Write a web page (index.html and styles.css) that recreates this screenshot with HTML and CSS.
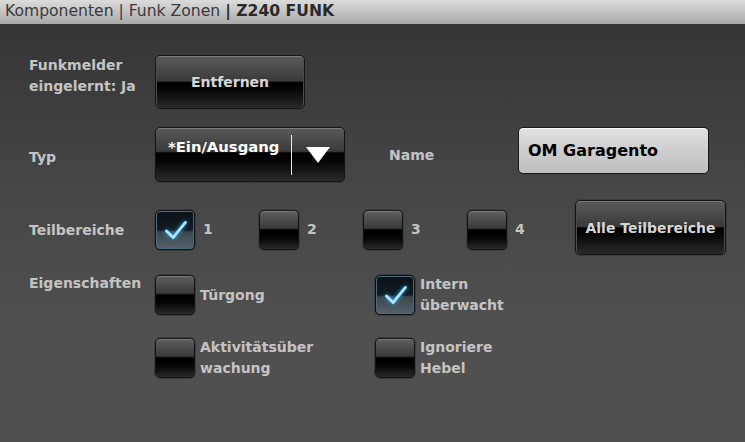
FILE: index.html
```html
<!DOCTYPE html>
<html lang="de">
<head>
    <meta charset="UTF-8">
    <title>Z240 FUNK</title>
    <link rel="stylesheet" href="styles.css">
</head>
<body>
    <div class="titlebar">Komponenten | Funk Zonen <b>| Z240 FUNK</b></div>

    <div class="panel">
        <!-- Funkmelder -->
        <div class="row row-learn">
            <div class="label label-learn">Funkmelder<br>eingelernt: Ja</div>
            <button class="btn btn-remove">Entfernen</button>
        </div>

        <!-- Typ / Name -->
        <div class="row row-type">
            <div class="label label-type">Typ</div>
            <div class="select">
                <span class="select-text">*Ein/Ausgang</span>
                <span class="select-sep"></span>
                <span class="select-arrow"></span>
            </div>
            <div class="label label-name">Name</div>
            <div class="name-field">OM Garagento</div>
        </div>

        <!-- Teilbereiche -->
        <div class="row row-areas">
            <div class="label label-areas">Teilbereiche</div>
            <div class="area"><span class="check checked"><svg viewBox="0 0 40 40"><path d="M11 21 L18 28 L31 12"/></svg></span><span class="opt">1</span></div>
            <div class="area"><span class="check"></span><span class="opt">2</span></div>
            <div class="area"><span class="check"></span><span class="opt">3</span></div>
            <div class="area"><span class="check"></span><span class="opt">4</span></div>
            <button class="btn btn-all">Alle Teilbereiche</button>
        </div>

        <!-- Eigenschaften -->
        <div class="row row-props">
            <div class="label label-top">Eigenschaften</div>
            <div class="prop"><span class="check"></span><span class="opt">Türgong</span></div>
            <div class="prop"><span class="check checked"><svg viewBox="0 0 40 40"><path d="M11 21 L18 28 L31 12"/></svg></span><span class="opt">Intern<br>überwacht</span></div>
        </div>
        <div class="row row-props2">
            <div class="label"></div>
            <div class="prop"><span class="check"></span><span class="opt">Aktivitätsüber<br>wachung</span></div>
            <div class="prop"><span class="check"></span><span class="opt">Ignoriere<br>Hebel</span></div>
        </div>
    </div>
</body>
</html>
```

FILE: styles.css
```css
html, body {
    margin: 0;
    height: 100%;
}
body {
    font-family: "DejaVu Sans", Verdana, sans-serif;
    background: linear-gradient(#333333, #474747 45%, #505050 75%, #505050);
    color: #c4c4c4;
    overflow: hidden;
}
.titlebar {
    height: 24px;
    line-height: 23px;
    padding-left: 5px;
    font-size: 15.6px;
    color: #3a3a3a;
    background: linear-gradient(#dcdcdc, #bdbdbd 60%, #a9a9a9);
    white-space: nowrap;
}
.titlebar b {
    color: #2a2a2a;
}
.panel {
    padding: 31px 0 0 29px;
}
.row {
    display: flex;
    align-items: center;
}
.label {
    width: 126px;
    flex: none;
    font-size: 14px;
    font-weight: bold;
    line-height: 21px;
}
.label-learn {
    margin-top: -12px;
}
.label-type {
    margin-top: 6px;
}
.label-areas {
    margin-top: 5px;
}
.label-top {
    align-self: flex-start;
    margin-top: -1px;
}
.btn {
    font-family: inherit;
    font-weight: bold;
    font-size: 14px;
    color: #d6d6d6;
    border: 1px solid #151515;
    border-radius: 5px;
    box-shadow: inset 0 1px 0 #7a7a7a, inset 1px 0 0 #4c4c4c, inset -1px 0 0 #4c4c4c, 0 0 0 1px #3c3c3c;
    background: linear-gradient(#5a5a5a, #3a3a3a 48%, #000 51%, #050505 62%, #2a2a2a);
    padding: 0;
    cursor: pointer;
}
.btn-remove {
    width: 150px;
    height: 54px;
}
.row-type {
    margin-top: 18px;
}
.select {
    width: 190px;
    height: 55px;
    box-sizing: border-box;
    display: flex;
    align-items: center;
    border: 1px solid #151515;
    border-radius: 5px;
    box-shadow: inset 0 1px 0 #7a7a7a, 0 0 0 1px #3c3c3c;
    background: linear-gradient(#5a5a5a, #3a3a3a 44%, #000 47%, #050505 62%, #2a2a2a);
    color: #fff;
    font-weight: bold;
    font-size: 14.8px;
}
.select-text {
    width: 123px;
    padding-left: 12px;
    margin-top: -16px;
    white-space: nowrap;
}
.select-sep {
    width: 1px;
    height: 40px;
    background: #e8e8e8;
}
.select-arrow {
    margin-left: 14px;
    width: 0;
    height: 0;
    border-left: 12px solid transparent;
    border-right: 12px solid transparent;
    border-top: 16px solid #fff;
}
.label-name {
    width: 129px;
    margin-left: 44px;
    margin-top: 1px;
}
.name-field {
    width: 191px;
    height: 47px;
    box-sizing: border-box;
    margin-top: -8px;
    padding-left: 9px;
    line-height: 45px;
    border: 1px solid #1a1a1a;
    border-radius: 5px;
    background: linear-gradient(#e2e2e2, #cdcdcd 50%, #c0c0c0);
    box-shadow: inset 0 1px 0 #f4f4f4;
    color: #000;
    font-weight: bold;
    font-size: 16px;
}
.row-areas {
    margin-top: 18px;
    height: 55px;
}
.area {
    width: 104px;
    flex: none;
    display: flex;
    align-items: center;
    margin-top: 4px;
}
.check {
    position: relative;
    width: 40px;
    height: 40px;
    box-sizing: border-box;
    flex: none;
    border: 1px solid #151515;
    border-radius: 5px;
    box-shadow: inset 0 1px 0 #7a7a7a, 0 0 0 1px #3c3c3c;
    background: linear-gradient(#5e5e5e, #3a3a3a 45%, #000 50%, #050505 70%, #2a2a2a);
}
.check.checked {
    border-color: #0c1418;
    box-shadow: inset 0 0 0 1px #4e6a7a, 0 0 0 1px #3c3c3c;
    background: linear-gradient(#0a1217, #111c23 50%, #3b464c 55%, #56616a);
}
.check svg {
    position: absolute;
    left: 0;
    top: 0;
    width: 38px;
    height: 38px;
}
.check path {
    fill: none;
    stroke: #a8e6ff;
    stroke-width: 3;
    stroke-linecap: round;
    stroke-linejoin: round;
    filter: drop-shadow(0 0 2px #2aa8ff);
}
.opt {
    font-size: 14px;
    font-weight: bold;
    line-height: 21px;
    margin-left: 8px;
}
.btn-all {
    width: 151px;
    height: 55px;
    margin-left: 4px;
}
.row-props {
    margin-top: 19px;
}
.prop {
    width: 220px;
    flex: none;
    display: flex;
    align-items: center;
}
.prop .opt {
    margin-left: 5px;
}
.row-props2 {
    margin-top: 21px;
}
```
